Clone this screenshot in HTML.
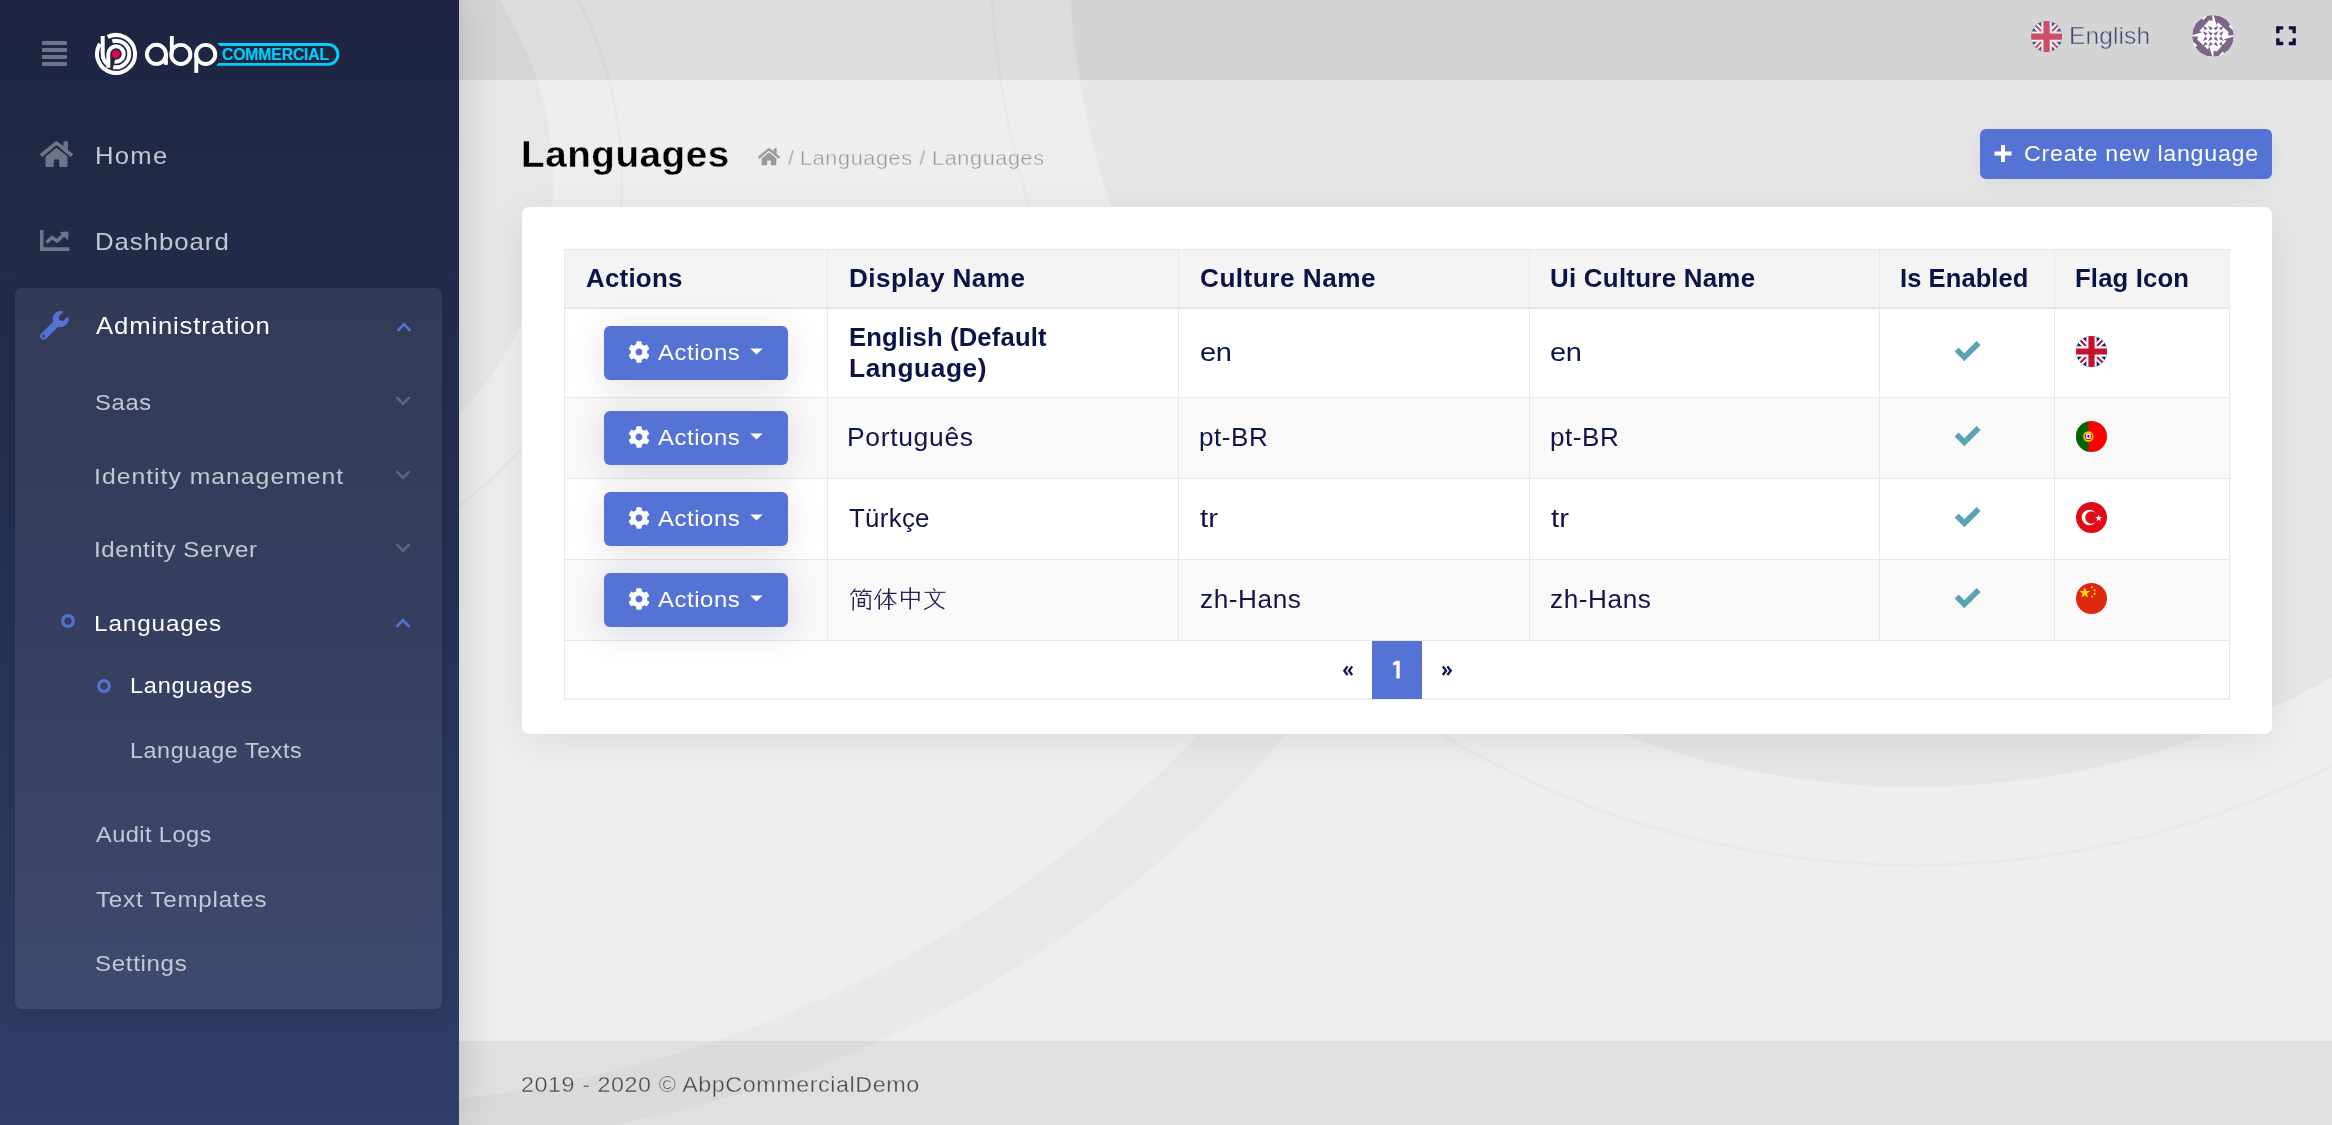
<!DOCTYPE html>
<html>
<head>
<meta charset="utf-8">
<style>
html,body{margin:0;padding:0;}
body{width:2332px;height:1125px;overflow:hidden;position:relative;font-family:"Liberation Sans",sans-serif;background:#ededed;}
.a{position:absolute;white-space:nowrap;}
#sidebar{position:absolute;left:0;top:0;width:459px;height:1125px;background:linear-gradient(180deg,#1e2441 0%,#212a47 18%,#253152 49%,#2c3a5f 80%,#303d69 100%);z-index:5;box-shadow:0 0 40px rgba(0,0,0,.16);}
#main{position:absolute;left:459px;top:0;width:1873px;height:1125px;overflow:hidden;background:#ededed;}
#header{position:absolute;left:0;top:0;width:1873px;height:80px;background:rgba(0,0,0,0.075);}
#footer{position:absolute;left:0;top:1041px;width:1873px;height:84px;background:rgba(0,0,0,0.06);}
.si{color:#c4c7d4;font-size:24px;line-height:24px;}
.sw{color:#ffffff;}
.grp{position:absolute;left:15px;top:288px;width:427px;height:721px;border-radius:7px;box-shadow:0 8px 24px rgba(0,0,0,.10);background:linear-gradient(180deg,#323a57 0%,#363f60 50%,#3e4a6f 100%);}
</style>
</head>
<body>
<div id="main">
  <svg class="a" style="left:0;top:0" width="1873" height="1125" viewBox="459 0 1873 1125">
    <rect x="459" y="0" width="1873" height="1125" fill="#eeeeee"/>
    <defs><mask id="bandm"><rect x="0" y="-200" width="2400" height="1400" fill="#000"/><circle cx="398" cy="-20" r="1165" fill="#fff"/><circle cx="318" cy="-120" r="1227" fill="#000"/></mask></defs>
    <rect x="459" y="0" width="1873" height="1125" fill="#e8e8e8" mask="url(#bandm)"/>
    <circle cx="219" cy="182" r="334" fill="#e7e7e7"/>
    <circle cx="219" cy="182" r="403" fill="none" stroke="#e8e8e8" stroke-width="3"/>
    <circle cx="1915" cy="-60" r="847" fill="#e6e6e6"/>
    <circle cx="1915" cy="-60" r="925" fill="none" stroke="#e9e9e9" stroke-width="3"/>
  </svg>
  <div id="header"></div>
  <!-- header right -->
  <svg class="a" style="left:1572.1px;top:20.8px" width="31.2" height="31.2" viewBox="0 0 60 60">
    <defs><clipPath id="cu"><circle cx="30" cy="30" r="30"/></clipPath></defs>
    <g clip-path="url(#cu)">
      <rect width="60" height="60" fill="#3c5791"/>
      <path d="M0 0 L60 60 M60 0 L0 60" stroke="#f0f0f0" stroke-width="12"/>
      <path d="M0 0 L60 60 M60 0 L0 60" stroke="#cf4c66" stroke-width="4"/>
      <path d="M30 0 V60 M0 30 H60" stroke="#f0f0f0" stroke-width="20"/>
      <path d="M30 0 V60 M0 30 H60" stroke="#cf4c66" stroke-width="12"/>
    </g>
  </svg>
  <div id="t_eng" class="a" style="left:1610.2px;top:24.4px;font-size:24.3px;line-height:24.3px;color:#3f4b73;letter-spacing:0.12px;transform-origin:0 0;transform:scaleX(1.0086);-webkit-text-stroke:0.45px #d5d5d5;">English</div>
  <svg class="a" style="left:1729px;top:12px" width="50" height="48" viewBox="0 0 1172 1125">
    <defs><clipPath id="av"><circle cx="585" cy="560" r="490"/></clipPath></defs>
    <g clip-path="url(#av)">
      <rect width="1172" height="1125" fill="#ffffff"/>
      <g fill="#7e6489"><polygon points="600,70 760,95 890,165 1000,300 950,335 1050,420 1085,545 935,548 950,470 700,240 670,310"/><polygon points="1075,575 1050,735 980,865 845,975 810,925 725,1025 600,1060 597,910 675,925 905,675 835,645"/><polygon points="570,1050 410,1025 280,955 170,820 220,785 120,700 85,575 235,572 220,650 470,880 500,810"/><polygon points="95,545 120,385 190,255 325,145 360,195 445,95 570,60 573,210 495,195 265,445 335,475"/><polygon points="345,320 457,376 401,432"/><polygon points="345,445 457,501 401,557"/><polygon points="345,687 457,631 401,575"/><polygon points="345,812 457,756 401,700"/><polygon points="470,320 582,376 526,432"/><polygon points="470,445 582,501 526,557"/><polygon points="470,687 582,631 526,575"/><polygon points="470,812 582,756 526,700"/><polygon points="712,320 600,376 656,432"/><polygon points="712,445 600,501 656,557"/><polygon points="712,687 600,631 656,575"/><polygon points="712,812 600,756 656,700"/><polygon points="837,320 725,376 781,432"/><polygon points="837,445 725,501 781,557"/><polygon points="837,687 725,631 781,575"/><polygon points="837,812 725,756 781,700"/></g>
    </g>
  </svg>
  <svg class="a" style="left:1817px;top:25.5px" width="20" height="20" viewBox="0 0 20 20"><path fill="none" stroke="#0b1142" stroke-width="3.4" d="M1.85 7.2 V1.85 H7.2 M12.8 1.85 H18.15 V7.2 M18.15 12.2 V17.55 H12.8 M7.2 17.55 H1.85 V12.2"/></svg>

  <!-- title -->
  <div id="t_title" class="a" style="left:62.3px;top:136.0px;font-size:37.6px;line-height:37.6px;color:#000;font-weight:bold;letter-spacing:0.59px;transform-origin:0 0;transform:scaleX(1.0250);-webkit-text-stroke:0.3px #ededed;">Languages</div>
  <svg class="a" style="left:299px;top:148px" width="22" height="18" viewBox="0 0 576 470">
    <path fill="#9a9a9a" d="M280.37 148.26L96 300.11V464a16 16 0 0 0 16 16l112.06-.29a16 16 0 0 0 15.920-16V368a16 16 0 0 1 16-16h64a16 16 0 0 1 16 16v95.64a16 16 0 0 0 16 16.05L464 480a16 16 0 0 0 16-16V300L295.67 148.26a12.19 12.19 0 0 0-15.3 0zM571.6 251.47L488 182.56V44.05a12 12 0 0 0-12-12h-56a12 12 0 0 0-12 12v72.61L318.47 43a48 48 0 0 0-61 0L4.34 251.47a12 12 0 0 0-1.6 16.9l25.5 31A12 12 0 0 0 45.15 301l235.22-193.74a12.19 12.19 0 0 1 15.3 0L530.9 301a12 12 0 0 0 16.9-1.6l25.5-31a12 12 0 0 0-1.7-16.93z" transform="translate(0,-28)"/>
  </svg>
  <div id="t_bcs1" class="a" style="left:329px;top:147.9px;font-size:20.6px;line-height:20.6px;color:#9a9a9a;-webkit-text-stroke:0.4px #ececec;">/</div><div id="t_bc1" class="a" style="left:341.1px;top:147.9px;font-size:20.6px;line-height:20.6px;color:#9a9a9a;letter-spacing:0.60px;transform-origin:0 0;transform:scaleX(1.0503);-webkit-text-stroke:0.4px #ececec;">Languages</div><div id="t_bcs2" class="a" style="left:460.5px;top:147.9px;font-size:20.6px;line-height:20.6px;color:#9a9a9a;-webkit-text-stroke:0.4px #ececec;">/</div><div id="t_bc2" class="a" style="left:472.7px;top:147.9px;font-size:20.6px;line-height:20.6px;color:#9a9a9a;letter-spacing:0.60px;transform-origin:0 0;transform:scaleX(1.0503);-webkit-text-stroke:0.4px #ececec;">Languages</div>

  <!-- create button -->
  <div class="a" style="left:1521px;top:129px;width:292px;height:50px;border-radius:6px;background:#5572d5;box-shadow:0 4px 24px rgba(0,0,0,.06)"></div>
  <svg class="a" style="left:1534px;top:144px" width="20" height="19" viewBox="0 0 20 19"><path d="M10 1 V18 M1.5 9.5 H18.5" stroke="#fff" stroke-width="4"/></svg>
  <div id="t_create" class="a" style="left:1565.3px;top:142.5px;font-size:21.8px;line-height:21.8px;color:#fff;letter-spacing:0.70px;transform-origin:0 0;transform:scaleX(1.0653);">Create new language</div>

  <!-- card -->
  <div class="a" style="left:63px;top:207px;width:1750px;height:527px;background:#fff;border-radius:7px;box-shadow:0 8px 40px rgba(0,0,0,.08)"></div>

  <!-- TABLE -->
  <div class="a" style="left:105px;top:249px;width:1666px;height:58px;background:#f4f4f4"></div>
  <div class="a" style="left:105px;top:309px;width:1666px;height:88px;background:#ffffff"></div>
  <div class="a" style="left:105px;top:398px;width:1666px;height:80px;background:#f9f9f9"></div>
  <div class="a" style="left:105px;top:479px;width:1666px;height:80px;background:#ffffff"></div>
  <div class="a" style="left:105px;top:560px;width:1666px;height:80px;background:#f9f9f9"></div>
  <div class="a" style="left:105px;top:249px;width:1666px;height:1px;background:#e6e6e6"></div>
  <div class="a" style="left:105px;top:307px;width:1666px;height:2px;background:#e6e6e6"></div>
  <div class="a" style="left:105px;top:397px;width:1666px;height:1px;background:#e8e8e8"></div>
  <div class="a" style="left:105px;top:478px;width:1666px;height:1px;background:#e8e8e8"></div>
  <div class="a" style="left:105px;top:559px;width:1666px;height:1px;background:#e8e8e8"></div>
  <div class="a" style="left:105px;top:640px;width:1666px;height:1px;background:#e8e8e8"></div>
  <div class="a" style="left:105px;top:698px;width:1666px;height:2px;background:#efefef"></div>
  <div class="a" style="left:368px;top:249px;width:1px;height:392px;background:#e8e8e8"></div>
  <div class="a" style="left:719px;top:249px;width:1px;height:392px;background:#e8e8e8"></div>
  <div class="a" style="left:1070px;top:249px;width:1px;height:392px;background:#e8e8e8"></div>
  <div class="a" style="left:1420px;top:249px;width:1px;height:392px;background:#e8e8e8"></div>
  <div class="a" style="left:1595px;top:249px;width:1px;height:392px;background:#e8e8e8"></div>
  <div class="a" style="left:105px;top:249px;width:1px;height:451px;background:#e8e8e8"></div>
  <div class="a" style="left:1770px;top:249px;width:1px;height:451px;background:#e8e8e8"></div>
  <div id="h_act" class="a" style="left:126.6px;top:265.5px;font-size:25.4px;line-height:25.4px;color:#0a1446;font-weight:bold;letter-spacing:0.24px;transform-origin:0 0;transform:scaleX(1.0188);">Actions</div>
  <div id="h_dn" class="a" style="left:389.6px;top:265.5px;font-size:25.4px;line-height:25.4px;color:#0a1446;font-weight:bold;letter-spacing:0.42px;transform-origin:0 0;transform:scaleX(1.0279);">Display Name</div>
  <div id="h_cn" class="a" style="left:740.8px;top:265.5px;font-size:25.4px;line-height:25.4px;color:#0a1446;font-weight:bold;letter-spacing:0.46px;transform-origin:0 0;transform:scaleX(1.0315);">Culture Name</div>
  <div id="h_ucn" class="a" style="left:1091.2px;top:265.5px;font-size:25.4px;line-height:25.4px;color:#0a1446;font-weight:bold;letter-spacing:0.26px;transform-origin:0 0;transform:scaleX(1.0193);">Ui Culture Name</div>
  <div id="h_ie" class="a" style="left:1441.3px;top:265.5px;font-size:25.4px;line-height:25.4px;color:#0a1446;font-weight:bold;letter-spacing:0.08px;transform-origin:0 0;transform:scaleX(1.0053);">Is Enabled</div>
  <div id="h_fi" class="a" style="left:1616.3px;top:265.5px;font-size:25.4px;line-height:25.4px;color:#0a1446;font-weight:bold;letter-spacing:0.15px;transform-origin:0 0;transform:scaleX(1.0121);">Flag Icon</div>
  <div class="a" style="left:145px;top:326px;width:184px;height:54px;border-radius:6px;background:#5572d5;box-shadow:0 5px 34px rgba(40,40,80,.15)"></div>
  <svg class="a" style="left:168.8px;top:340.5px" width="22" height="22" viewBox="0 0 512 512"><path fill="#fff" d="M487.4 315.7l-42.6-24.6c4.3-23.2 4.3-47 0-70.2l42.6-24.6c4.9-2.8 7.1-8.6 5.5-14-11.1-35.6-30-67.8-54.7-94.6-3.8-4.100-10-5.100-14.800-2.300L380.8 110c-17.900-15.400-38.500-27.300-60.800-35.100V25.800c0-5.600-3.900-10.500-9.400-11.700-36.700-8.200-74.300-7.800-109.200 0-5.500 1.200-9.400 6.100-9.400 11.700V75c-22.200 7.900-42.800 19.800-60.800 35.100L88.700 85.500c-4.900-2.800-11-1.900-14.800 2.300-24.700 26.700-43.600 58.900-54.700 94.600-1.700 5.400.6 11.200 5.500 14L67.300 221c-4.300 23.200-4.300 47 0 70.200l-42.600 24.600c-4.900 2.800-7.100 8.600-5.500 14 11.100 35.600 30 67.800 54.700 94.600 3.800 4.100 10 5.100 14.800 2.300l42.600-24.600c17.900 15.400 38.500 27.300 60.800 35.100v49.200c0 5.600 3.900 10.500 9.400 11.700 36.700 8.200 74.300 7.800 109.200 0 5.500-1.200 9.400-6.100 9.400-11.700v-49.200c22.200-7.900 42.800-19.800 60.800-35.100l42.600 24.600c4.900 2.800 11 1.900 14.800-2.300 24.700-26.700 43.600-58.900 54.700-94.600 1.500-5.500-.7-11.300-5.600-14.100zM256 336c-44.100 0-80-35.900-80-80s35.900-80 80-80 80 35.900 80 80-35.900 80-80 80z"/></svg>
  <div id="b_act0" class="a" style="left:198.7px;top:341.3px;font-size:22.8px;line-height:22.8px;color:#fff;font-weight:normal;letter-spacing:0.55px;transform-origin:0 0;transform:scaleX(1.0478);">Actions</div>
  <svg class="a" style="left:291px;top:347.5px" width="13" height="7" viewBox="0 0 13 7"><path d="M0.3 0.5 H12.7 L6.5 6.5 Z" fill="#fff"/></svg>
  <svg class="a" style="left:1494.8px;top:340.0px" width="28" height="22" viewBox="0 0 28 22"><path d="M2.6 9.6 L10.3 17.3 L24.6 3" fill="none" stroke="#58a4b4" stroke-width="5.6" stroke-linecap="butt" stroke-linejoin="miter"/></svg>
  <div class="a" style="left:145px;top:411px;width:184px;height:54px;border-radius:6px;background:#5572d5;box-shadow:0 5px 34px rgba(40,40,80,.15)"></div>
  <svg class="a" style="left:168.8px;top:425.5px" width="22" height="22" viewBox="0 0 512 512"><path fill="#fff" d="M487.4 315.7l-42.6-24.6c4.3-23.2 4.3-47 0-70.2l42.6-24.6c4.9-2.8 7.1-8.6 5.5-14-11.1-35.6-30-67.8-54.7-94.6-3.8-4.100-10-5.100-14.800-2.300L380.8 110c-17.900-15.400-38.500-27.300-60.800-35.100V25.800c0-5.600-3.900-10.500-9.400-11.700-36.700-8.200-74.300-7.800-109.200 0-5.500 1.200-9.400 6.100-9.400 11.700V75c-22.200 7.900-42.800 19.800-60.800 35.100L88.700 85.500c-4.900-2.800-11-1.900-14.800 2.300-24.700 26.700-43.600 58.900-54.700 94.600-1.700 5.400.6 11.200 5.500 14L67.300 221c-4.300 23.200-4.300 47 0 70.200l-42.600 24.600c-4.900 2.800-7.100 8.600-5.500 14 11.100 35.600 30 67.800 54.700 94.600 3.800 4.100 10 5.100 14.800 2.300l42.600-24.600c17.900 15.400 38.500 27.300 60.800 35.100v49.200c0 5.600 3.900 10.500 9.400 11.700 36.700 8.200 74.300 7.800 109.200 0 5.500-1.200 9.400-6.100 9.400-11.700v-49.200c22.200-7.900 42.800-19.800 60.800-35.100l42.600 24.600c4.900 2.800 11 1.900 14.800-2.300 24.700-26.700 43.600-58.900 54.700-94.600 1.500-5.500-.7-11.300-5.600-14.100zM256 336c-44.100 0-80-35.900-80-80s35.900-80 80-80 80 35.900 80 80-35.900 80-80 80z"/></svg>
  <div id="b_act1" class="a" style="left:198.7px;top:426.3px;font-size:22.8px;line-height:22.8px;color:#fff;font-weight:normal;letter-spacing:0.55px;transform-origin:0 0;transform:scaleX(1.0478);">Actions</div>
  <svg class="a" style="left:291px;top:432.5px" width="13" height="7" viewBox="0 0 13 7"><path d="M0.3 0.5 H12.7 L6.5 6.5 Z" fill="#fff"/></svg>
  <svg class="a" style="left:1494.8px;top:425.0px" width="28" height="22" viewBox="0 0 28 22"><path d="M2.6 9.6 L10.3 17.3 L24.6 3" fill="none" stroke="#58a4b4" stroke-width="5.6" stroke-linecap="butt" stroke-linejoin="miter"/></svg>
  <div class="a" style="left:145px;top:492px;width:184px;height:54px;border-radius:6px;background:#5572d5;box-shadow:0 5px 34px rgba(40,40,80,.15)"></div>
  <svg class="a" style="left:168.8px;top:506.5px" width="22" height="22" viewBox="0 0 512 512"><path fill="#fff" d="M487.4 315.7l-42.6-24.6c4.3-23.2 4.3-47 0-70.2l42.6-24.6c4.9-2.8 7.1-8.6 5.5-14-11.1-35.6-30-67.8-54.7-94.6-3.8-4.100-10-5.100-14.800-2.300L380.8 110c-17.900-15.400-38.500-27.300-60.800-35.100V25.800c0-5.600-3.900-10.500-9.400-11.700-36.700-8.200-74.300-7.800-109.200 0-5.500 1.200-9.400 6.100-9.400 11.700V75c-22.200 7.900-42.800 19.800-60.800 35.100L88.700 85.500c-4.900-2.800-11-1.900-14.800 2.300-24.700 26.700-43.600 58.900-54.700 94.600-1.700 5.400.6 11.200 5.500 14L67.300 221c-4.300 23.200-4.300 47 0 70.200l-42.600 24.600c-4.900 2.800-7.100 8.600-5.500 14 11.100 35.600 30 67.800 54.700 94.600 3.800 4.100 10 5.100 14.800 2.300l42.600-24.600c17.900 15.400 38.500 27.300 60.800 35.100v49.200c0 5.600 3.900 10.500 9.400 11.700 36.700 8.200 74.300 7.800 109.200 0 5.500-1.200 9.400-6.100 9.400-11.700v-49.200c22.200-7.900 42.800-19.800 60.800-35.100l42.600 24.600c4.900 2.800 11 1.900 14.800-2.300 24.700-26.700 43.600-58.900 54.700-94.600 1.500-5.500-.7-11.300-5.600-14.100zM256 336c-44.100 0-80-35.900-80-80s35.900-80 80-80 80 35.900 80 80-35.900 80-80 80z"/></svg>
  <div id="b_act2" class="a" style="left:198.7px;top:507.3px;font-size:22.8px;line-height:22.8px;color:#fff;font-weight:normal;letter-spacing:0.55px;transform-origin:0 0;transform:scaleX(1.0478);">Actions</div>
  <svg class="a" style="left:291px;top:513.5px" width="13" height="7" viewBox="0 0 13 7"><path d="M0.3 0.5 H12.7 L6.5 6.5 Z" fill="#fff"/></svg>
  <svg class="a" style="left:1494.8px;top:506.0px" width="28" height="22" viewBox="0 0 28 22"><path d="M2.6 9.6 L10.3 17.3 L24.6 3" fill="none" stroke="#58a4b4" stroke-width="5.6" stroke-linecap="butt" stroke-linejoin="miter"/></svg>
  <div class="a" style="left:145px;top:573px;width:184px;height:54px;border-radius:6px;background:#5572d5;box-shadow:0 5px 34px rgba(40,40,80,.15)"></div>
  <svg class="a" style="left:168.8px;top:587.5px" width="22" height="22" viewBox="0 0 512 512"><path fill="#fff" d="M487.4 315.7l-42.6-24.6c4.3-23.2 4.3-47 0-70.2l42.6-24.6c4.9-2.8 7.1-8.6 5.5-14-11.1-35.6-30-67.8-54.7-94.6-3.8-4.100-10-5.100-14.800-2.300L380.8 110c-17.900-15.400-38.500-27.300-60.800-35.100V25.800c0-5.600-3.900-10.500-9.400-11.700-36.700-8.200-74.300-7.800-109.200 0-5.500 1.200-9.400 6.100-9.400 11.700V75c-22.200 7.900-42.800 19.800-60.800 35.100L88.700 85.500c-4.900-2.800-11-1.900-14.800 2.300-24.700 26.700-43.600 58.900-54.700 94.600-1.700 5.400.6 11.200 5.500 14L67.300 221c-4.300 23.200-4.300 47 0 70.200l-42.600 24.600c-4.900 2.800-7.100 8.600-5.500 14 11.100 35.600 30 67.800 54.700 94.600 3.800 4.100 10 5.100 14.800 2.300l42.600-24.600c17.900 15.400 38.500 27.300 60.800 35.100v49.200c0 5.600 3.900 10.500 9.400 11.700 36.700 8.200 74.300 7.800 109.200 0 5.500-1.200 9.400-6.100 9.400-11.700v-49.200c22.200-7.900 42.800-19.800 60.800-35.100l42.600 24.600c4.900 2.800 11 1.900 14.800-2.300 24.700-26.700 43.600-58.900 54.700-94.600 1.500-5.500-.7-11.300-5.600-14.100zM256 336c-44.100 0-80-35.900-80-80s35.900-80 80-80 80 35.900 80 80-35.900 80-80 80z"/></svg>
  <div id="b_act3" class="a" style="left:198.7px;top:588.3px;font-size:22.8px;line-height:22.8px;color:#fff;font-weight:normal;letter-spacing:0.55px;transform-origin:0 0;transform:scaleX(1.0478);">Actions</div>
  <svg class="a" style="left:291px;top:594.5px" width="13" height="7" viewBox="0 0 13 7"><path d="M0.3 0.5 H12.7 L6.5 6.5 Z" fill="#fff"/></svg>
  <svg class="a" style="left:1494.8px;top:587.0px" width="28" height="22" viewBox="0 0 28 22"><path d="M2.6 9.6 L10.3 17.3 L24.6 3" fill="none" stroke="#58a4b4" stroke-width="5.6" stroke-linecap="butt" stroke-linejoin="miter"/></svg>
  <div id="r_en" class="a" style="left:389.7px;top:324.5px;font-size:25.3px;line-height:25.3px;color:#0a1446;font-weight:bold;letter-spacing:0.16px;transform-origin:0 0;transform:scaleX(1.0132);">English (Default</div>
  <div id="r_en2" class="a" style="left:389.7px;top:355.6px;font-size:25.3px;line-height:25.3px;color:#0a1446;font-weight:bold;letter-spacing:0.56px;transform-origin:0 0;transform:scaleX(1.0383);">Language)</div>
  <div id="r_pt" class="a" style="left:388.4px;top:424.6px;font-size:25.3px;line-height:25.3px;color:#0d1649;font-weight:normal;letter-spacing:0.64px;transform-origin:0 0;transform:scaleX(1.0462);">Português</div>
  <div id="r_tr" class="a" style="left:390.0px;top:505.9px;font-size:25.3px;line-height:25.3px;color:#0d1649;font-weight:normal;letter-spacing:0.30px;transform-origin:0 0;transform:scaleX(1.0211);">Türkçe</div>
  <svg class="a" style="left:387px;top:582px" width="104" height="34" viewBox="0 0 2332 762">
    <g fill="none" stroke="#1c2658" stroke-width="29" stroke-linecap="butt">
      <path d="M210 150 L100 295 M185 210 H335 M222 245 L250 330 M420 160 L310 290 M400 212 H575 M440 248 L490 272"/>
      <path d="M165 330 L160 640 M300 300 H545 M538 300 V612 L455 590 M280 365 V555 M280 372 H412 M412 365 V545 M280 458 H412 M280 545 H412" stroke-width="32"/>
      <path d="M790 150 L640 400" stroke-width="27"/>
      <path d="M745 290 V615 M960 140 V625" stroke-width="35"/>
      <path d="M815 255 H1135 M850 505 H1065" stroke-width="24"/>
      <path d="M950 280 Q890 430 775 520 M975 290 Q1020 430 1130 495" stroke-width="27"/>
      <path d="M1250 215 V440 M1632 225 V432 M1440 115 V618" stroke-width="35"/>
      <path d="M1245 232 H1655 M1255 390 H1630" stroke-width="24"/>
      <path d="M1960 140 L2000 205" stroke-width="27"/>
      <path d="M1760 232 H2230" stroke-width="24"/>
      <path d="M2100 245 Q2030 520 1750 620" stroke-width="26"/>
      <path d="M1885 250 Q1960 500 2205 600" stroke-width="34"/>
    </g>
  </svg>
  <div id="c1" class="a" style="left:740.5px;top:339.8px;font-size:25.3px;line-height:25.3px;color:#0d1649;font-weight:normal;letter-spacing:-0.25px;transform-origin:0 0;transform:scaleX(1.1467);">en</div>
  <div id="c2" class="a" style="left:740.1px;top:424.6px;font-size:25.3px;line-height:25.3px;color:#0d1649;font-weight:normal;letter-spacing:0.55px;transform-origin:0 0;transform:scaleX(1.0299);">pt-BR</div>
  <div id="c3" class="a" style="left:741.3px;top:505.6px;font-size:25.3px;line-height:25.3px;color:#0d1649;font-weight:normal;letter-spacing:0.05px;transform-origin:0 0;transform:scaleX(1.1594);">tr</div>
  <div id="c4" class="a" style="left:740.6px;top:586.5px;font-size:25.3px;line-height:25.3px;color:#0d1649;font-weight:normal;letter-spacing:0.54px;transform-origin:0 0;transform:scaleX(1.0355);">zh-Hans</div>
  <div id="u1" class="a" style="left:1091.2px;top:339.8px;font-size:25.3px;line-height:25.3px;color:#0d1649;font-weight:normal;letter-spacing:-0.25px;transform-origin:0 0;transform:scaleX(1.1467);">en</div>
  <div id="u2" class="a" style="left:1090.8px;top:424.6px;font-size:25.3px;line-height:25.3px;color:#0d1649;font-weight:normal;letter-spacing:0.55px;transform-origin:0 0;transform:scaleX(1.0299);">pt-BR</div>
  <div id="u3" class="a" style="left:1092.0px;top:505.6px;font-size:25.3px;line-height:25.3px;color:#0d1649;font-weight:normal;letter-spacing:0.05px;transform-origin:0 0;transform:scaleX(1.1594);">tr</div>
  <div id="u4" class="a" style="left:1091.3px;top:586.5px;font-size:25.3px;line-height:25.3px;color:#0d1649;font-weight:normal;letter-spacing:0.54px;transform-origin:0 0;transform:scaleX(1.0355);">zh-Hans</div>
  <svg class="a" style="left:1617.1999999999998px;top:335.9px" width="31" height="31" viewBox="0 0 60 60"><defs><clipPath id="cf0"><circle cx="30" cy="30" r="30"/></clipPath></defs><g clip-path="url(#cf0)">
<rect width="60" height="60" fill="#012169"/><path d="M0 0 L60 60 M60 0 L0 60" stroke="#fff" stroke-width="12"/>
<path d="M0 0 L60 60 M60 0 L0 60" stroke="#c8102e" stroke-width="4"/><path d="M30 0 V60 M0 30 H60" stroke="#fff" stroke-width="20"/>
<path d="M30 0 V60 M0 30 H60" stroke="#c8102e" stroke-width="12"/></g></svg>
  <svg class="a" style="left:1617.1999999999998px;top:420.8px" width="31" height="31" viewBox="0 0 60 60"><defs><clipPath id="cf1"><circle cx="30" cy="30" r="30"/></clipPath></defs><g clip-path="url(#cf1)">
<rect width="60" height="60" fill="#ff0000"/><rect width="24" height="60" fill="#006600"/>
<circle cx="24" cy="30" r="10" fill="#ffcc00"/><circle cx="24" cy="30" r="7" fill="#ff0000"/><rect x="19.5" y="24" width="9" height="11" rx="2" fill="#fff"/><rect x="22" y="27" width="4" height="5" fill="#003399"/></g></svg>
  <svg class="a" style="left:1617.1999999999998px;top:501.9px" width="31" height="31" viewBox="0 0 60 60"><circle cx="30" cy="30" r="30" fill="#e30a17"/><circle cx="26" cy="30" r="15" fill="#fff"/><circle cx="30" cy="30" r="12" fill="#e30a17"/>
<path fill="#fff" d="M44 24.5 L45.7 29.2 L50.6 29.3 L46.7 32.3 L48.1 37 L44 34.2 L39.9 37 L41.3 32.3 L37.4 29.3 L42.3 29.2 Z"/></svg>
  <svg class="a" style="left:1617.1999999999998px;top:582.7px" width="31" height="31" viewBox="0 0 60 60"><circle cx="30" cy="30" r="30" fill="#de2910"/>
<path fill="#ffde00" d="M17 8 L19.6 15.4 L27.4 15.6 L21.2 20.4 L23.4 27.9 L17 23.5 L10.6 27.9 L12.8 20.4 L6.6 15.6 L14.4 15.4 Z"/>
<circle cx="31" cy="8" r="2" fill="#ffde00"/><circle cx="36" cy="14" r="2" fill="#ffde00"/><circle cx="36" cy="21" r="2" fill="#ffde00"/><circle cx="31" cy="26" r="2" fill="#ffde00"/></svg>
  <div class="a" style="left:913px;top:641px;width:50px;height:58px;background:#5572d5"></div>
  
  
  
  <svg class="a" style="left:880px;top:660px" width="120" height="22" viewBox="1339 660 120 22">
    <g fill="none" stroke="#0d1649" stroke-width="2.3" stroke-linejoin="miter">
      <path d="M1347.6 666.4 L1344.3 670.7 L1347.6 675"/>
      <path d="M1352.2 666.4 L1348.9 670.7 L1352.2 675"/>
      <path d="M1442.8 666.4 L1446.1 670.7 L1442.8 675"/>
      <path d="M1447.4 666.4 L1450.7 670.7 L1447.4 675"/>
    </g>
    <path d="M1396.4 660.8 H1399.7 V678.4 H1396.4 V664.6 L1393.2 665.6 V662.4 Z" fill="#fff"/>
  </svg>
  <!-- /TABLE -->
  <div id="footer"></div>
  <div id="t_foot" class="a" style="left:61.8px;top:1073.5px;font-size:22.3px;line-height:22.3px;color:#474747;letter-spacing:0.53px;transform-origin:0 0;transform:scaleX(1.0462);-webkit-text-stroke:0.4px #dedede;">2019 - 2020 © AbpCommercialDemo</div>
</div>

<div id="sidebar">
  <div class="grp"></div>
  <!-- hamburger -->
  <div class="a" style="left:42px;top:41px;width:25px;height:4px;background:#6e7489;border-radius:1px"></div>
  <div class="a" style="left:42px;top:48px;width:25px;height:4px;background:#6e7489;border-radius:1px"></div>
  <div class="a" style="left:42px;top:55px;width:25px;height:4px;background:#6e7489;border-radius:1px"></div>
  <div class="a" style="left:42px;top:62px;width:25px;height:4px;background:#6e7489;border-radius:1px"></div>
  <!-- logo mark -->
  <svg class="a" style="left:93px;top:31px" width="46" height="46" viewBox="-23 -23 46 46">
    <g fill="none" stroke="#fff" stroke-width="4" stroke-linecap="butt">
      <path d="M-8.33 -17.08 A19 19 0 1 1 -16.11 -10.07 M-3.67 -12.78 A13.3 13.3 0 1 1 -2.77 13.01 M-8.00 10.62 A13.3 13.3 0 0 1 -13.30 0.00 M-7.70 0.00 A7.7 7.7 0 1 1 -1.34 7.58"/>
    </g>
    <g fill="#fff">
      <rect x="-15.3" y="-18" width="4" height="18"/>
      <rect x="-9.7" y="0" width="4" height="13.8"/>
    </g>
    <circle cx="0" cy="0" r="3.9" fill="#e8004c"/>
  </svg>
  <!-- abp -->
  <svg class="a" style="left:140px;top:30px" width="80" height="46" viewBox="140 30 80 46">
    <g fill="none" stroke="#fff" stroke-width="3.9">
      <circle cx="156.4" cy="54.3" r="9.55"/>
      <circle cx="180.8" cy="54.4" r="9.55"/>
      <circle cx="205.7" cy="54.4" r="9.55"/>
    </g>
    <g fill="#fff">
      <rect x="164" y="54" width="3.9" height="10.8"/>
      <rect x="169.9" y="36" width="3.85" height="18.5"/>
      <rect x="194.35" y="54" width="3.85" height="18.9"/>
    </g>
  </svg>
  <!-- COMMERCIAL pill -->
  <svg class="a" style="left:212px;top:38px" width="130" height="32" viewBox="212 38 130 32">
    <path d="M217 43 L328 43 A11.3 11.3 0 0 1 328 65.8 L216 65.8 L218.8 62.9 L328 62.9 A8.45 8.45 0 0 0 328 46 L220 46 Z" fill="#00d0f8"/>
  </svg>
  <div class="a" style="left:222px;top:46.8px;font-size:15.9px;line-height:15.9px;font-weight:bold;color:#00d0f8;letter-spacing:-0.25px">COMMERCIAL</div>

  <!-- Home -->
  <svg class="a" style="left:40px;top:141px" width="33" height="27" viewBox="0 0 576 470">
    <path fill="#6e7489" d="M280.37 148.26L96 300.11V464a16 16 0 0 0 16 16l112.06-.29a16 16 0 0 0 15.92-16V368a16 16 0 0 1 16-16h64a16 16 0 0 1 16 16v95.64a16 16 0 0 0 16 16.05L464 480a16 16 0 0 0 16-16V300L295.67 148.26a12.19 12.19 0 0 0-15.3 0zM571.6 251.47L488 182.56V44.05a12 12 0 0 0-12-12h-56a12 12 0 0 0-12 12v72.61L318.47 43a48 48 0 0 0-61 0L4.34 251.47a12 12 0 0 0-1.6 16.9l25.5 31A12 12 0 0 0 45.15 301l235.22-193.74a12.19 12.19 0 0 1 15.3 0L530.9 301a12 12 0 0 0 16.9-1.6l25.5-31a12 12 0 0 0-1.7-16.93z" transform="translate(0,-28)"/>
  </svg>
  <div id="t_home" class="a si" style="left:95.0px;top:143.8px;letter-spacing:1.21px;transform-origin:0 0;transform:scaleX(1.0673);">Home</div>

  <!-- Dashboard -->
  <svg class="a" style="left:40px;top:230px" width="30" height="21" viewBox="0 0 30 21">
    <path fill="#6e7489" d="M0 0 H3.5 V17.2 H29.5 V21 H0 Z"/>
    <path fill="none" stroke="#6e7489" stroke-width="3.6" stroke-linejoin="miter" d="M6.5 12.5 L12 7.5 L17 11 L24.5 4"/>
    <path fill="#6e7489" d="M19.5 2 L28.5 1.5 L28 10.5 Z"/>
  </svg>
  <div id="t_dash" class="a si" style="left:94.8px;top:230.4px;letter-spacing:0.92px;transform-origin:0 0;transform:scaleX(1.0718);">Dashboard</div>

  <!-- Administration -->
  <svg class="a" style="left:40.3px;top:311px" width="28.8" height="28.8" viewBox="0 0 512 512">
    <path fill="#5472d4" d="M507.73 109.1c-2.24-9.03-13.54-12.09-20.12-5.51l-74.36 74.36-67.88-11.31-11.31-67.88 74.36-74.36c6.62-6.62 3.43-17.9-5.66-20.16-47.38-11.74-99.55.91-136.58 37.93-39.64 39.64-50.55 97.1-34.05 147.2L18.74 402.76c-24.99 24.99-24.99 65.51 0 90.5 24.99 24.99 65.51 24.99 90.5 0l213.21-213.21c50.12 16.71 107.47 5.68 147.37-34.22 37.07-37.07 49.7-89.32 37.91-136.73zM64 472c-13.25 0-24-10.75-24-24 0-13.26 10.75-24 24-24s24 10.74 24 24c0 13.25-10.75 24-24 24z"/>
  </svg>
  <div id="t_admin" class="a si sw" style="left:96.0px;top:314.4px;letter-spacing:0.78px;transform-origin:0 0;transform:scaleX(1.0715);">Administration</div>
  <svg class="a" style="left:395px;top:321px" width="18" height="12" viewBox="0 0 18 12"><path d="M2.5 9.8 L9 3.2 L15.5 9.8" fill="none" stroke="#5472d4" stroke-width="2.6"/></svg>

  <!-- sub items -->
  <div id="t_saas" class="a si" style="left:95.1px;top:391px;font-size:22.8px;line-height:22.8px;letter-spacing:0.62px;transform-origin:0 0;transform:scaleX(1.0442);">Saas</div>
  <svg class="a" style="left:394px;top:394px" width="18" height="12" viewBox="0 0 18 12"><path d="M2.5 3.2 L9 9.8 L15.5 3.2" fill="none" stroke="#5d6581" stroke-width="2.6"/></svg>
  <div id="t_idm" class="a si" style="left:94.0px;top:465px;font-size:22.8px;line-height:22.8px;letter-spacing:0.92px;transform-origin:0 0;transform:scaleX(1.0860);">Identity management</div>
  <svg class="a" style="left:394px;top:468px" width="18" height="12" viewBox="0 0 18 12"><path d="M2.5 3.2 L9 9.8 L15.5 3.2" fill="none" stroke="#5d6581" stroke-width="2.6"/></svg>
  <div id="t_ids" class="a si" style="left:94.1px;top:538px;font-size:22.8px;line-height:22.8px;letter-spacing:0.54px;transform-origin:0 0;transform:scaleX(1.0549);">Identity Server</div>
  <svg class="a" style="left:394px;top:541px" width="18" height="12" viewBox="0 0 18 12"><path d="M2.5 3.2 L9 9.8 L15.5 3.2" fill="none" stroke="#5d6581" stroke-width="2.6"/></svg>

  <svg class="a" style="left:60px;top:613px" width="16" height="16" viewBox="0 0 16 16"><circle cx="8" cy="8" r="5.3" fill="none" stroke="#5472d4" stroke-width="3.2"/></svg>
  <div id="t_lang2" class="a si sw" style="left:94.3px;top:611.5px;font-size:22.8px;line-height:22.8px;letter-spacing:0.83px;transform-origin:0 0;transform:scaleX(1.0644);">Languages</div>
  <svg class="a" style="left:394px;top:617px" width="18" height="12" viewBox="0 0 18 12"><path d="M2.5 9.8 L9 3.2 L15.5 9.8" fill="none" stroke="#5472d4" stroke-width="2.6"/></svg>

  <svg class="a" style="left:96px;top:678px" width="16" height="16" viewBox="0 0 16 16"><circle cx="8" cy="8" r="5.3" fill="none" stroke="#5472d4" stroke-width="3.2"/></svg>
  <div id="t_lang3" class="a si sw" style="left:129.8px;top:674.8px;font-size:22.3px;line-height:22.3px;letter-spacing:0.70px;transform-origin:0 0;transform:scaleX(1.0549);">Languages</div>
  <div id="t_ltx" class="a si" style="left:129.9px;top:739.9px;font-size:22.3px;line-height:22.3px;letter-spacing:0.54px;transform-origin:0 0;transform:scaleX(1.0468);">Language Texts</div>

  <div id="t_audit" class="a si" style="left:96.3px;top:823px;font-size:22.8px;line-height:22.8px;letter-spacing:0.41px;transform-origin:0 0;transform:scaleX(1.0348);">Audit Logs</div>
  <div id="t_tt" class="a si" style="left:96.0px;top:888px;font-size:22.8px;line-height:22.8px;letter-spacing:0.69px;transform-origin:0 0;transform:scaleX(1.0626);">Text Templates</div>
  <div id="t_set" class="a si" style="left:95.2px;top:952.3px;font-size:22.8px;line-height:22.8px;letter-spacing:0.63px;transform-origin:0 0;transform:scaleX(1.0567);">Settings</div>
</div>
</body>
</html>
